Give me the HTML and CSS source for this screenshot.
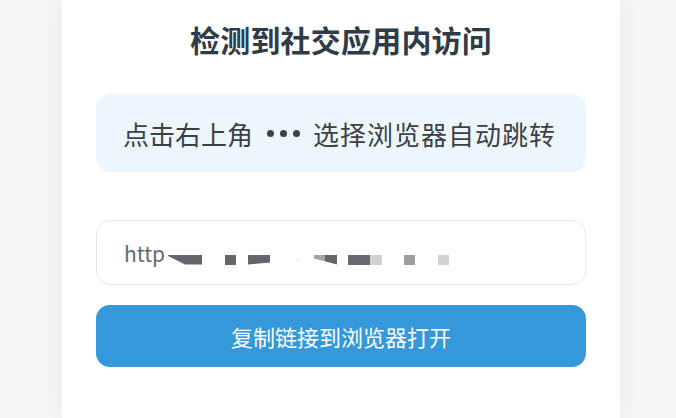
FILE: index.html
```html
<!DOCTYPE html>
<html lang="zh-CN">
<head>
    <meta charset="UTF-8">
    <meta name="viewport" content="width=device-width, initial-scale=1.0">
    <title>请在浏览器中打开</title>
    <link rel="stylesheet" href="styles.css">
</head>
<body>
    <div class="page">
        <main class="card">
            <h1 class="title">检测到社交应用内访问</h1>

            <div class="tip">
                <span>点击右上角</span>
                <span class="dots"><i></i><i></i><i></i></span>
                <span class="tip-action">选择浏览器自动跳转</span>
            </div>

            <div class="link-box">
                <span class="link-text">http</span>
                <span class="mask">
                    <b class="m1"></b>
                    <b class="m2"></b>
                    <b class="m3"></b>
                    <b class="m4"></b>
                    <b class="m5"></b>
                    <b class="m6"></b>
                    <b class="m7"></b>
                    <b class="m8"></b>
                </span>
            </div>

            <button class="copy-btn" type="button">复制链接到浏览器打开</button>
        </main>
    </div>
</body>
</html>
```

FILE: styles.css
```css
body {
    margin: 0;
    background: #f5f6f8;
    font-family: "Noto Sans CJK SC", "Noto Sans", sans-serif;
}

.page {
    height: 100vh;
    overflow: hidden;
}

.card {
    box-sizing: border-box;
    width: 558px;
    height: 100%;
    margin-left: 62px;
    padding: 18px 34px 20px;
    background: #ffffff;
    box-shadow: 0 0 22px rgba(0, 0, 0, 0.06);
}

.title {
    margin: 0;
    font-size: 30px;
    line-height: 42px;
    font-weight: bold;
    letter-spacing: 0.2px;
    text-align: center;
    color: #2f3b47;
}

.tip {
    display: flex;
    align-items: center;
    height: 78px;
    margin-top: 34px;
    padding-left: 27px;
    border-radius: 14px;
    background: #edf6fd;
    font-size: 26px;
    color: #3c4147;
}

.tip-action {
    letter-spacing: 1px;
}

.dots {
    display: flex;
    gap: 6px;
    margin: 0 13px 0 14px;
}

.dots i {
    width: 7px;
    height: 7px;
    border-radius: 50%;
    background: #3c4147;
}

.link-box {
    box-sizing: border-box;
    display: flex;
    align-items: center;
    height: 65px;
    margin-top: 48px;
    padding-left: 27px;
    border: 1px solid #e6e7e8;
    border-radius: 14px;
}

.link-text {
    width: 44px;
    font-size: 21px;
    color: #666a6e;
}

.mask {
    display: flex;
    margin-top: 14px;
}

.mask b {
    display: block;
    height: 10px;
    background: #63676b;
}

.m1 { width: 34px; clip-path: polygon(0 0, 100% 0, 100% 100%, 50% 100%, 0 15%); }
.m2 { width: 11px; margin-left: 23px; }
.m3 { width: 22px; margin-left: 12px; clip-path: polygon(0 0, 100% 0, 100% 80%, 0 100%); }
.m4 { width: 2px; height: 1px !important; margin: 5px 0 0 27px; background: #c8c9cb !important; }
.m5 { width: 23px; margin-left: 15px; background: linear-gradient(to right, #a2a5a8 48%, #63676b 48%) !important; clip-path: polygon(0 0, 100% 0, 100% 100%, 0 40%); }
.m6 { width: 34px; margin-left: 11px; background: linear-gradient(to right, #666a6e 65%, #d0d1d3 65%) !important; }
.m7 { width: 11px; margin-left: 22px; background: #9d9fa2 !important; }
.m8 { width: 11px; margin-left: 23px; background: #d0d1d3 !important; }

.copy-btn {
    display: block;
    width: 100%;
    height: 62px;
    margin-top: 20px;
    border: none;
    border-radius: 14px;
    background: #3498db;
    color: #ffffff;
    font-family: inherit;
    font-size: 22px;
    cursor: pointer;
}
```
